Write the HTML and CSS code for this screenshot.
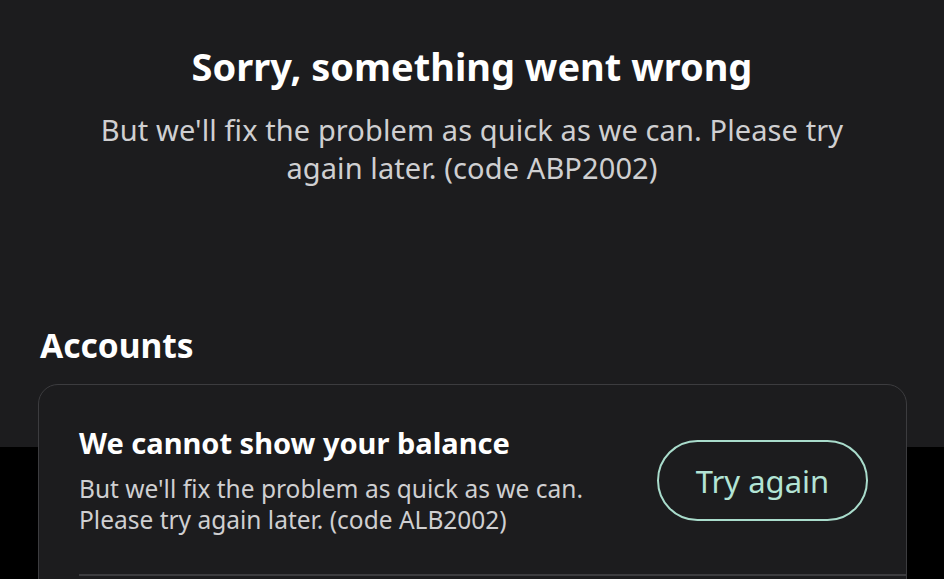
FILE: index.html
```html
<!DOCTYPE html>
<html lang="en">
<head>
<meta charset="utf-8">
<title>Error</title>
<link rel="stylesheet" href="styles.css">
</head>
<body>
<main class="page">
  <section class="error">
    <h1 class="error-title">Sorry, something went wrong</h1>
    <p class="error-text">But we'll fix the problem as quick as we can. Please try again later. (code ABP2002)</p>
  </section>
  <section class="accounts">
    <h2 class="accounts-title">Accounts</h2>
    <div class="card">
      <div class="card-row">
        <div class="card-info">
          <h3 class="card-title">We cannot show your balance</h3>
          <p class="card-text">But we'll fix the problem as quick as we can.<br>Please try again later. (code ALB2002)</p>
        </div>
        <button class="retry" type="button">Try again</button>
      </div>
      <div class="card-divider"></div>
    </div>
  </section>
</main>
</body>
</html>
```
FILE: styles.css
```css
html, body {
  margin: 0;
  padding: 0;
}
body {
  width: 944px;
  height: 579px;
  overflow: hidden;
  background: linear-gradient(to bottom, #1c1c1e 0, #1c1c1e 447px, #000 447px, #000 100%);
  font-family: "Noto Sans", "Open Sans", sans-serif;
  color: #ffffff;
}
.page {
  display: flex;
  flex-direction: column;
}
.error {
  display: flex;
  flex-direction: column;
  align-items: center;
  padding-top: 42px;
}
.error-title {
  margin: 0;
  font-size: 38px;
  line-height: 48px;
  font-weight: 700;
  color: #ffffff;
}
.error-text {
  margin: 21px 0 0;
  width: 780px;
  text-align: center;
  font-size: 29px;
  line-height: 38px;
  letter-spacing: 0.1px;
  color: #cfcfd1;
}
.accounts {
  padding: 0 37px 0 38px;
  margin-top: 138px;
}
.accounts-title {
  margin: 0 0 0 2px;
  font-size: 33.5px;
  line-height: 40px;
  font-weight: 700;
}
.card {
  margin-top: 19px;
  border: 1.5px solid #3c3c3f;
  border-radius: 20px;
  background: #1c1c1e;
  padding: 41px 0 0 40px;
  height: 200px;
}
.card-row {
  display: flex;
  align-items: flex-start;
  justify-content: space-between;
  padding-right: 38px;
}
.card-title {
  margin: 0;
  font-size: 29px;
  line-height: 34px;
  font-weight: 700;
}
.card-text {
  margin: 13px 0 0;
  font-size: 24.5px;
  line-height: 31px;
  color: #cfcfd1;
}
.retry {
  margin-top: 14px;
  width: 211px;
  height: 81px;
  border: 2px solid #a9dccc;
  border-radius: 41px;
  background: transparent;
  color: #b3e4d5;
  font-family: inherit;
  font-size: 31px;
  padding: 0;
}
.card-divider {
  margin-top: 39px;
  height: 2px;
  background: #3c3c3f;
}
```
